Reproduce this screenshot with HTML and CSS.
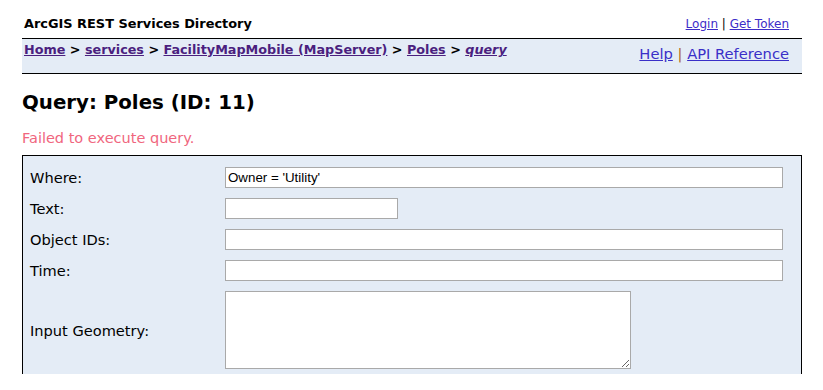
FILE: index.html
```html
<!DOCTYPE html>
<html lang="en">
<head>
    <meta charset="UTF-8">
    <title>Query: Poles (ID: 11)</title>
    <link rel="stylesheet" href="styles.css">
</head>
<body>
    <div class="page">
        <div class="top-bar">
            <span class="site-title">ArcGIS REST Services Directory</span>
            <span class="user-links"><a href="#">Login</a> | <a href="#">Get Token</a></span>
        </div>
        <div class="nav-bar">
            <div class="breadcrumbs">
                <a href="#">Home</a> &gt; <a href="#">services</a> &gt; <a href="#">FacilityMapMobile (MapServer)</a> &gt; <a href="#">Poles</a> &gt; <a href="#"><i>query</i></a>
            </div>
            <div class="help-links">
                <a href="#">Help</a> | <a href="#">API Reference</a>
            </div>
        </div>

        <h1>Query: Poles (ID: 11)</h1>
        <p class="error">Failed to execute query.</p>

        <form class="query-form">
            <label>Where:</label>
            <input type="text" class="wide" value="Owner = 'Utility'">

            <label>Text:</label>
            <input type="text" class="short">

            <label>Object IDs:</label>
            <input type="text" class="wide">

            <label>Time:</label>
            <input type="text" class="wide">

            <label>Input Geometry:</label>
            <textarea></textarea>
        </form>
    </div>
</body>
</html>
```

FILE: styles.css
```css
body {
    font-family: "DejaVu Sans", Verdana, sans-serif;
    margin: 0;
    background-color: #fff;
    color: #000;
}

.page {
    width: 780px;
    margin-left: 22px;
}

.top-bar {
    height: 38px;
    box-sizing: border-box;
    display: flex;
    justify-content: space-between;
    align-items: flex-end;
    padding: 0 13px 7px 2px;
}

.site-title {
    font-weight: bold;
    font-size: 12.9px;
}

.user-links {
    font-size: 12px;
}

.user-links a {
    color: #3d2cc8;
}

.nav-bar {
    height: 34px;
    background-color: #e4ecf6;
    border-top: 1px solid #000;
    border-bottom: 1px solid #000;
    display: flex;
    justify-content: space-between;
    align-items: flex-start;
    padding: 0 13px 0 2px;
}

.breadcrumbs {
    font-size: 12.75px;
    font-weight: bold;
    padding-top: 3px;
}

.breadcrumbs a {
    color: #4b1f7f;
}

.help-links {
    font-size: 14.7px;
    padding-top: 6px;
    color: #b06a1c;
}

.help-links a {
    color: #3a2fc8;
}

h1 {
    font-size: 19.8px;
    margin: 17px 0 0;
    line-height: 24px;
}

.error {
    color: #f0667e;
    font-size: 14.5px;
    line-height: 17px;
    margin: 15px 0 8px;
}

.query-form {
    background-color: #e4ecf6;
    border: 1px solid #000;
    border-bottom: none;
    display: grid;
    grid-template-columns: 195px 1fr;
    row-gap: 10px;
    align-items: center;
    padding: 11px 18px 5px 7px;
}

.query-form label {
    font-size: 14.6px;
}

.query-form input,
.query-form textarea {
    font-family: "Liberation Sans", Arial, sans-serif;
    font-size: 13.33px;
    border: 1px solid #a9a9a9;
    margin: 0;
    padding: 1px 2px;
    box-sizing: border-box;
    background: #fff;
}

.query-form input {
    height: 21px;
}

.query-form .wide {
    width: 558px;
}

.query-form .short {
    width: 173px;
}

.query-form textarea {
    width: 406px;
    height: 78px;
    resize: both;
}
```
